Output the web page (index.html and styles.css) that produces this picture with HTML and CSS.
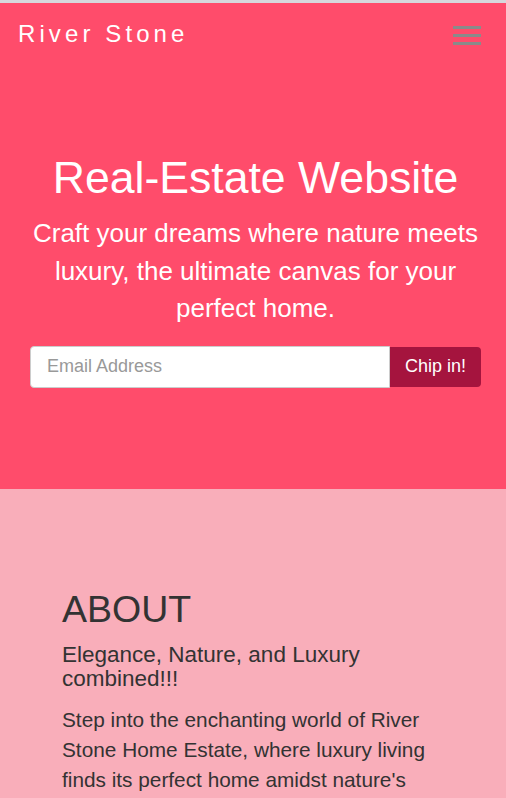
FILE: index.html
```html
<!DOCTYPE html>
<html lang="en">
<head>
<meta charset="utf-8">
<title>River Stone</title>
<link rel="stylesheet" href="styles.css">
</head>
<body>
<header class="hero">
  <nav class="navbar">
    <span class="brand">River Stone</span>
    <button class="toggler" aria-label="Menu">
      <span class="bar"></span><span class="bar"></span><span class="bar"></span>
    </button>
  </nav>
  <div class="hero-body">
    <h1 class="hero-title">Real-Estate Website</h1>
    <p class="hero-lead">Craft your dreams where nature meets luxury, the ultimate canvas for your perfect home.</p>
    <form class="signup">
      <input class="email" type="email" placeholder="Email Address">
      <button class="chip" type="button">Chip in!</button>
    </form>
  </div>
</header>
<section class="about">
  <h2 class="about-title">ABOUT</h2>
  <h3 class="about-sub">Elegance, Nature, and Luxury combined!!!</h3>
  <p class="about-text">Step into the enchanting world of River Stone Home Estate, where luxury living finds its perfect home amidst nature's beauty.</p>
</section>
</body>
</html>
```

FILE: styles.css
```css
* { box-sizing: border-box; }
html, body { margin: 0; padding: 0; }
body {
  font-family: "Liberation Sans", Arial, sans-serif;
  border-top: 3px solid #d6d8dc;
  color: #333;
  background: #f9aeba;
}
.hero {
  background: #ff4c6b;
  height: 486px;
  display: flex;
  flex-direction: column;
}
.navbar {
  display: flex;
  justify-content: space-between;
  align-items: center;
  padding: 17px 25px 0 18px;
}
.brand {
  color: #fff;
  font-size: 24px;
  letter-spacing: 4.1px;
  line-height: 28px;
}
.toggler {
  background: none;
  border: 0;
  padding: 0;
  width: 28px;
  display: flex;
  flex-direction: column;
  gap: 5px;
  margin-top: 3px;
}
.bar {
  display: block;
  height: 3px;
  background: #8a8a8a;
}
.hero-body {
  padding: 0 25px 0 30px;
  text-align: center;
  color: #fff;
}
.hero-title {
  margin: 104px 0 0;
  font-size: 44.6px;
  font-weight: 400;
  line-height: 52px;
}
.hero-lead {
  margin: 11px 0 0;
  font-size: 26px;
  line-height: 37.5px;
}
.signup {
  display: flex;
  align-items: center;
  margin-top: 18px;
}
.email {
  flex: 1;
  height: 42px;
  border: 1px solid #ccc;
  border-radius: 4px 0 0 4px;
  padding: 0 16px;
  font-family: inherit;
  font-size: 18px;
  color: #555;
  background: #fff;
}
.email::placeholder { color: #999; }
.chip {
  height: 40px;
  width: 91px;
  border: 0;
  border-radius: 0 4px 4px 0;
  background: #a5143e;
  color: #fff;
  font-family: inherit;
  font-size: 18px;
}
.about {
  padding: 100px 50px 0 62px;
}
.about-title {
  margin: 0;
  font-size: 37.5px;
  font-weight: 400;
  line-height: 40px;
}
.about-sub {
  margin: 14px 0 0;
  font-size: 22.5px;
  font-weight: 400;
  line-height: 24px;
}
.about-text {
  margin: 14px 0 0;
  font-size: 20.8px;
  line-height: 30px;
}
```
